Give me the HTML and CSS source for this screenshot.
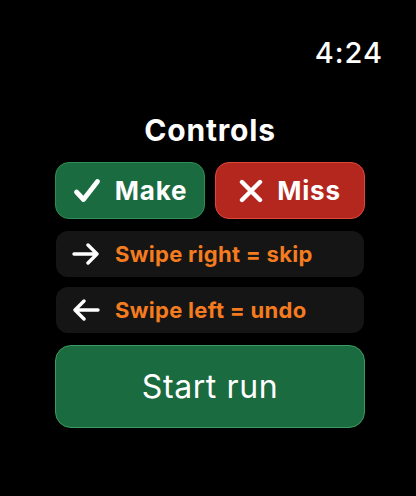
FILE: index.html
```html
<!DOCTYPE html>
<html>
<head>
<meta charset="utf-8">
<link rel="stylesheet" href="styles.css">
</head>
<body>
<div class="screen">
  <div class="status"><span class="time">4:24</span></div>
  <h1 class="title">Controls</h1>
  <div class="pair">
    <div class="btn make">
      <svg class="ico-check" viewBox="0 0 28 26" width="28" height="26"><path d="M3.5 14 L10.5 21.5 L24.5 3.5" fill="none" stroke="#fff" stroke-width="4.8" stroke-linecap="round" stroke-linejoin="round"/></svg>
      <span>Make</span>
    </div>
    <div class="btn miss">
      <svg class="ico-x" viewBox="0 0 24 24" width="24" height="24"><path d="M3 3 L21 21 M21 3 L3 21" fill="none" stroke="#fff" stroke-width="4.4" stroke-linecap="round"/></svg>
      <span>Miss</span>
    </div>
  </div>
  <div class="hint">
    <svg viewBox="0 0 28 22" width="28" height="22"><path d="M2 11 H25 M16 2 L25 11 L16 20" fill="none" stroke="#fff" stroke-width="3.4" stroke-linecap="round" stroke-linejoin="round"/></svg>
    <span>Swipe right = skip</span>
  </div>
  <div class="hint">
    <svg viewBox="0 0 28 22" width="28" height="22"><path d="M26 11 H3 M12 2 L3 11 L12 20" fill="none" stroke="#fff" stroke-width="3.4" stroke-linecap="round" stroke-linejoin="round"/></svg>
    <span>Swipe left = undo</span>
  </div>
  <div class="start">Start run</div>
</div>
</body>
</html>
```
FILE: styles.css
```css
html, body {
  margin: 0;
  padding: 0;
  background: #000;
}
body {
  width: 416px;
  height: 496px;
  overflow: hidden;
  font-family: Inter, "Noto Sans", sans-serif;
  color: #fff;
}
.screen {
  display: flex;
  flex-direction: column;
  padding: 35px 0 0 55px;
  width: 310px;
}
.status {
  display: flex;
  justify-content: flex-end;
  margin-right: -18px;
}
.time {
  font-size: 29px;
  line-height: 35px;
  font-weight: 500;
  letter-spacing: 1px;
}
.title {
  margin: 43px 0 0 0;
  font-size: 30px;
  line-height: 35px;
  font-weight: 700;
  letter-spacing: 0.8px;
  text-align: center;
}
.pair {
  display: flex;
  gap: 10px;
  margin-top: 14px;
}
.btn {
  flex: 1;
  height: 57px;
  box-sizing: border-box;
  border-radius: 14px;
  display: flex;
  align-items: center;
  justify-content: center;
  gap: 14px;
  font-size: 26px;
  font-weight: 700;
  letter-spacing: 0.8px;
}
.make {
  background: #1b6b40;
  border: 1.5px solid #2f8d56;
}
.miss {
  background: #b3271f;
  border: 1.5px solid #e0473b;
}
.hint {
  margin-top: 12px;
  height: 46px;
  margin-left: 1px;
  margin-right: 1px;
  border-radius: 12px;
  background: #151515;
  display: flex;
  align-items: center;
  padding-left: 16px;
  gap: 15px;
  color: #f47b1f;
  font-size: 22px;
  font-weight: 700;
  letter-spacing: 0.3px;
}
.hint + .hint {
  margin-top: 10px;
}
.start {
  margin-top: 12px;
  height: 83px;
  box-sizing: border-box;
  border-radius: 16px;
  background: #1b6b40;
  border: 1.5px solid #3a9a62;
  display: flex;
  align-items: center;
  justify-content: center;
  font-size: 32px;
  font-weight: 400;
  letter-spacing: 0.6px;
}
```
